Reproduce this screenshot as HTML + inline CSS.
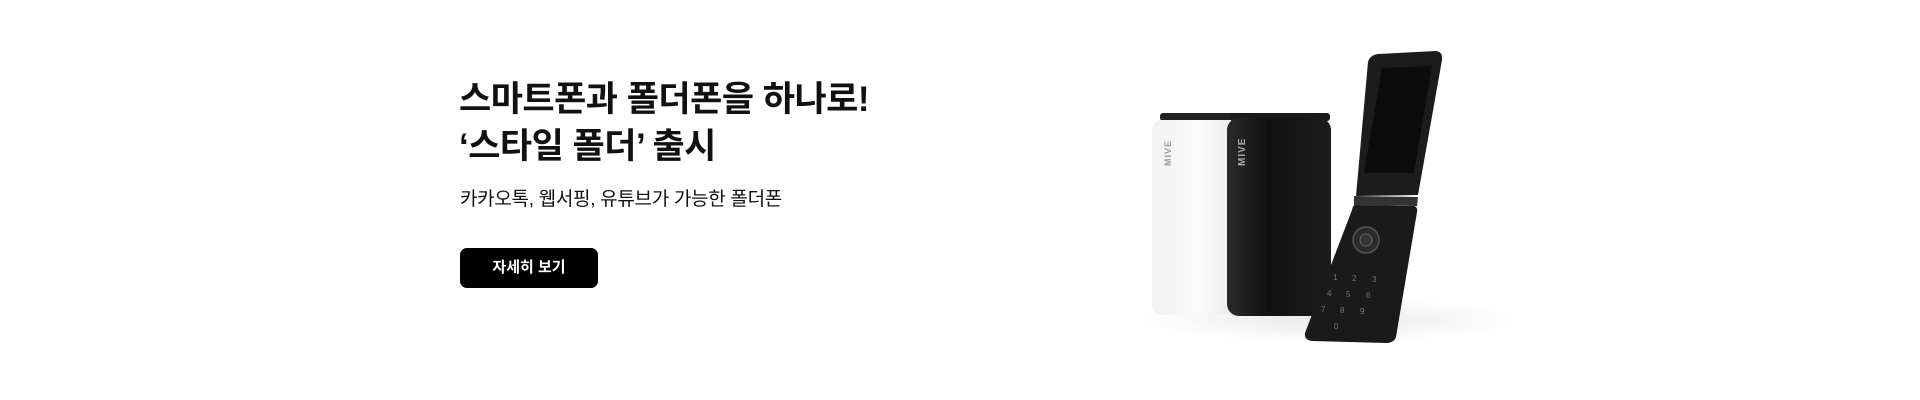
<!DOCTYPE html>
<html><head><meta charset="utf-8"><style>
body{margin:0;width:1920px;height:400px;background:#fff;position:relative;overflow:hidden;font-family:"Liberation Sans","Noto Sans CJK KR",sans-serif;color:#111}
h1{position:absolute;left:459px;top:76px;margin:0;font-size:35px;line-height:47px;font-weight:700;letter-spacing:-0.5px}
.sub{position:absolute;left:460px;top:184px;font-size:19px;letter-spacing:-0.3px}
.btn{position:absolute;left:460px;top:248px;width:138px;height:40px;background:#000;border-radius:7px;color:#fff;font-size:15px;font-weight:700;text-align:center;line-height:40px}
svg{position:absolute;left:0;top:0}
</style></head><body>
<h1>스마트폰과 폴더폰을 하나로!<br>‘스타일 폴더’ 출시</h1>
<div class="sub">카카오톡, 웹서핑, 유튜브가 가능한 폴더폰</div>
<div class="btn">자세히 보기</div>
<svg width="1920" height="400">
<defs>
<linearGradient id="w" x1="0" x2="1"><stop offset="0" stop-color="#f2f2f2"/><stop offset="0.5" stop-color="#fafafa"/><stop offset="1" stop-color="#e6e6e6"/></linearGradient>
<linearGradient id="b" x1="0" x2="1"><stop offset="0" stop-color="#2a2a2a"/><stop offset="0.4" stop-color="#111"/><stop offset="1" stop-color="#1c1c1c"/></linearGradient>
<radialGradient id="sh" cx="0.5" cy="0.5" r="0.5"><stop offset="0" stop-color="#e8e8e8"/><stop offset="1" stop-color="#fff"/></radialGradient>
</defs>
<ellipse cx="1330" cy="320" rx="190" ry="22" fill="url(#sh)"/>
<rect x="1160" y="113" width="80" height="8" rx="3" fill="#222"/>
<rect x="1152" y="120" width="95" height="195" rx="10" fill="url(#w)"/>
<rect x="1230" y="113" width="100" height="8" rx="3" fill="#1a1a1a"/>
<rect x="1227" y="118" width="104" height="198" rx="12" fill="url(#b)"/>
<text x="0" y="0" transform="translate(1171,166) rotate(-90)" font-size="9" font-weight="700" fill="#999" letter-spacing="1">MIVE</text>
<text x="0" y="0" transform="translate(1245,166) rotate(-90)" font-size="10" font-weight="700" fill="#aaa" letter-spacing="1">MIVE</text>
<path d="M1378 54 L1436 51 Q1443 52 1442 60 L1418 195 L1356 196 L1368 62 Q1370 55 1378 54Z" fill="#1c1c1c"/>
<path d="M1382 68 L1432 66 L1414 173 L1364 173Z" fill="#0c0c0c"/>
<path d="M1354 196 L1418 197 L1417 206 L1354 205Z" fill="#333"/>
<path d="M1355 205 L1414 206 Q1418 207 1417 212 L1396 337 Q1394 343 1386 343 L1312 341 Q1304 340 1305 333 L1352 210 Q1353 205 1355 205Z" fill="#1a1a1a"/>
<circle cx="1366" cy="240" r="13" fill="#2a2a2a" stroke="#555" stroke-width="1.5"/>
<circle cx="1366" cy="240" r="6" fill="#333" stroke="#666"/>
<g fill="#777" font-size="8">
<text x="1333" y="280">1</text><text x="1352" y="281">2</text><text x="1372" y="282">3</text>
<text x="1327" y="296">4</text><text x="1346" y="297">5</text><text x="1366" y="298">6</text>
<text x="1321" y="312">7</text><text x="1340" y="313">8</text><text x="1360" y="314">9</text>
<text x="1334" y="329">0</text>
</g>
</svg>
</body></html>
